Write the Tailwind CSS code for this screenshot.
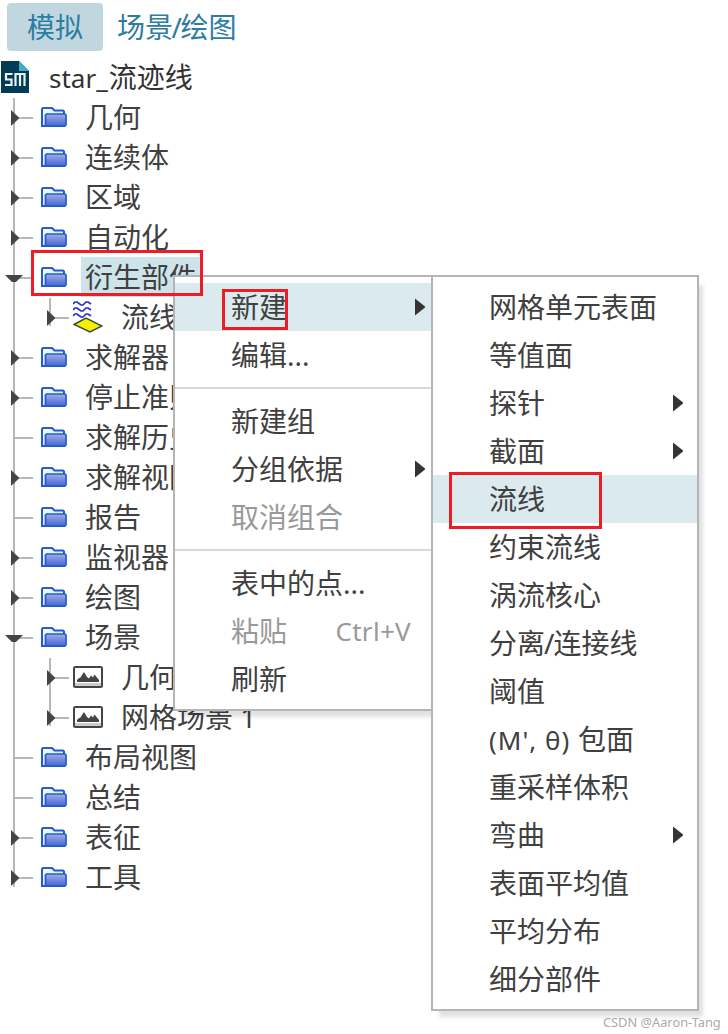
<!DOCTYPE html>
<html lang="zh-CN">
<head>
    <meta charset="UTF-8">
    <meta name="viewport" content="width=device-width, initial-scale=1.0">
    <title>star_流迹线</title>
    <script src="https://cdn.jsdelivr.net/npm/@tailwindcss/browser@4"></script>
</head>
<body class="bg-white font-['Noto_Sans','Noto_Sans_CJK_SC',sans-serif] text-[28px] leading-[40px] text-[#404040]">
    <div class="relative w-[728px] h-[1034px] overflow-hidden">
        <!-- Tabs -->
        <div class="flex h-[58px] pt-[3px] pl-[7px] text-[#2c7da2]">
            <div class="w-24 h-12 rounded bg-[#c0d7e0] text-center leading-[48px]">模拟</div>
            <div class="pl-[14px] leading-[48px] whitespace-nowrap">场景<span class="-mx-[1.5px]">/</span>绘图</div>
        </div>

        <!-- Tree -->
        <div class="flex items-center h-10">
            <svg class="w-7 h-8 ml-px mt-[-2px] shrink-0" viewBox="0 0 28 32">
                <path d="M0 0H18L28 10V32H0Z" fill="#023b54"/>
                <path d="M18 0L28 10H18Z" fill="#43abc9"/>
                <g fill="none" stroke="#e8f4f7" stroke-width="2.200">
                    <path d="M11.500 13H5V18.500H10.500V24H4"/>
                    <path d="M14.500 25V13H23.500V25M19 13V25"/>
                </g>
            </svg>
            <div class="ml-5 -mt-[2px] whitespace-nowrap text-[#333]"><span class="text-[26px] mr-px">star_</span>流迹线</div>
        </div>
        <div id="tree"></div>

        <!-- Context menu -->
        <div id="menu" class="absolute left-[173px] top-[275px] w-[260px] py-[6px] border-2 border-[#b5b5b5] bg-white shadow-[6px_8px_4px_-2px_rgba(0,0,0,0.12)]"></div>

        <!-- Submenu -->
        <div id="submenu" class="absolute left-[431px] top-[275px] w-[268px] py-[6px] border-2 border-[#b5b5b5] bg-white shadow-[6px_8px_4px_-2px_rgba(0,0,0,0.12)]"></div>

        <!-- Red marks -->
        <div class="absolute left-[31px] top-[250px] w-[172px] h-[46px] border-3 border-[#ee1c24]"></div>
        <div class="absolute left-[222px] top-[289px] w-[66px] h-[41px] border-3 border-[#ee1c24]"></div>
        <div class="absolute left-[449px] top-[472px] w-[153px] h-[57px] border-3 border-[#ee1c24]"></div>

        <div class="absolute left-[603px] top-[1012px] text-[12.8px] leading-5 text-[#aaa] whitespace-nowrap">CSDN @Aaron-Tang</div>
    </div>

    <script>
        const folder = `
            <svg class="w-[26px] h-5 -mt-[2px] shrink-0" viewBox="0 0 26 20">
                <defs>
                    <linearGradient id="front" x2="0" y2="1"><stop offset="0" stop-color="#8fb5ea"/><stop offset=".3" stop-color="#8b98dc"/><stop offset="1" stop-color="#4268d2"/></linearGradient>
                    <linearGradient id="back" x2="1" y2="1"><stop offset="0" stop-color="#fff"/><stop offset="1" stop-color="#b9dcf5"/></linearGradient>
                </defs>
                <path d="M1 19V2L2 1H11L13.500 3.500H22L23 4.500V19Z" fill="url(#back)" stroke="#245bd0" stroke-width="2"/>
                <path d="M4.500 19V8L5.500 7H24L25 8V18L24 19Z" fill="url(#front)" stroke="#245bd0" stroke-width="1.700"/>
            </svg>`;

        const scene = `
            <svg class="w-[30px] h-[22px] -mt-[2px] shrink-0" viewBox="0 0 30 22">
                <rect x="1" y="1" width="28" height="20" rx="1.500" fill="#fff" stroke="#444" stroke-width="2"/>
                <path d="M2 17H28V20H2Z" fill="#ccc"/>
                <path d="M4 16V14L6 12H7L11 6L14 11L16 12.500L18 9.500L20 11.500L21.500 8.500L26 14V16Z" fill="#444"/>
            </svg>`;

        const streamline = `
            <svg class="w-[30px] h-8 -mt-[2px] shrink-0" viewBox="0 0 30 32">
                <path d="M1 23.500L13 17L29 25L17 31Z" fill="#f2f200" stroke="#444" stroke-width="1.500"/>
                <g fill="none" stroke="#2432b8" stroke-width="1.700">
                    <path d="M0 3L2 1H4L8 4H10L13 1H15L18 3"/>
                    <path d="M0 9L2 7H4L8 10H10L13 7H15L18 9"/>
                    <path d="M0 15L2 13H4L8 16H10L13 13H15L18 15"/>
                </g>
            </svg>`;

        // [name, state] : closed, open, leaf
        const tree = [
            ['几何', 'closed'], ['连续体', 'closed'], ['区域', 'closed'], ['自动化', 'closed'],
            ['衍生部件', 'open', [['流线', streamline]]],
            ['求解器', 'closed'], ['停止准则', 'closed'], ['求解历史', 'leaf'], ['求解视图', 'closed'],
            ['报告', 'leaf'], ['监视器', 'closed'], ['绘图', 'closed'],
            ['场景', 'open', [['几何场景 1', scene], ['网格场景 1', scene]]],
            ['布局视图', 'leaf'], ['总结', 'leaf'], ['表征', 'closed'], ['工具', 'closed']
        ];

        const arrows = {
            closed: '<path d="M11 12V28L19 20.500V19.500Z" fill="#444"/>',
            open: '<path d="M5 17H23L16 24H12Z" fill="#444"/>',
            leaf: ''
        };

        let html = '';
        tree.forEach(([name, state, children], i) => {
            const end = i === tree.length - 1 ? 29 : 40;
            const label = name === '衍生部件' ? 'h-10 -mt-[2px] ml-[14px] pl-1 w-[120px] bg-[#cde5ea] whitespace-nowrap' : '-mt-[2px] ml-[18px] whitespace-nowrap';
            html += `
                <div class="flex items-center h-10">
                    <svg class="w-[41px] h-10 shrink-0" viewBox="0 0 41 40">
                        <path d="M14 0V${end}M14 20H33" stroke="#b7b7b7" stroke-width="2" fill="none"/>${arrows[state]}
                    </svg>
                    ${folder}
                    <div class="${label}">${name}</div>
                </div>`;
            (children || []).forEach(([child, icon], j) => {
                const last = j === children.length - 1 ? 28 : 40;
                html += `
                    <div class="flex items-center h-10">
                        <svg class="w-[73px] h-10 shrink-0" viewBox="0 0 73 40">
                            <path d="M14 0V40M50 0V${last}M50 20H69" stroke="#b7b7b7" stroke-width="2" fill="none"/>
                            <path d="M47 12V28L55 20.500V19.500Z" fill="#444"/>
                        </svg>
                        ${icon}
                        <div class="-mt-[2px] ml-[18px] whitespace-nowrap">${child}</div>
                    </div>`;
            });
        });
        document.getElementById('tree').innerHTML = html;

        const more = '<svg class="w-[10px] h-[18px] ml-auto" viewBox="0 0 10 18"><path d="M0 0.500V17.500L10 9.500V8.500Z" fill="#333"/></svg>';

        function drawMenu(id, items, pad) {
            document.getElementById(id).innerHTML = items.map(([name, opt = '', key = '']) => {
                if (name === '-') return '<div class="h-[2px] my-2 bg-[#d8d8d8]"></div>';
                const color = opt.includes('off') ? 'text-[#999]' : 'text-[#404040]';
                const bg = opt.includes('on') ? 'bg-[#daeaee]' : '';
                return `
                    <div class="flex items-center h-12 whitespace-nowrap ${pad} ${color} ${bg}">
                        <span>${name}</span>
                        ${key ? `<span class="ml-auto mr-[14px] text-[26px] tracking-[0.3px]">${key}</span>` : ''}
                        ${opt.includes('more') ? more : ''}
                    </div>`;
            }).join('');
        }

        drawMenu('menu', [
            ['新建', 'on more'], ['编辑...'], ['-'],
            ['新建组'], ['分组依据', 'more'], ['取消组合', 'off'], ['-'],
            ['表中的点...'], ['粘贴', 'off', 'Ctrl+V'], ['刷新']
        ], 'pl-14 pr-[6px]');

        drawMenu('submenu', [
            ['网格单元表面'], ['等值面'], ['探针', 'more'], ['截面', 'more'], ['流线', 'on'],
            ['约束流线'], ['涡流核心'], ['分离<span class="-mx-px">/</span>连接线'], ['阈值'],
            ['<span class="text-[26px] tracking-[1px]">(M\', θ) </span>包面'],
            ['重采样体积'], ['弯曲', 'more'], ['表面平均值'], ['平均分布'], ['细分部件']
        ], 'pl-14 pr-[14px]');
    </script>
</body>
</html>
